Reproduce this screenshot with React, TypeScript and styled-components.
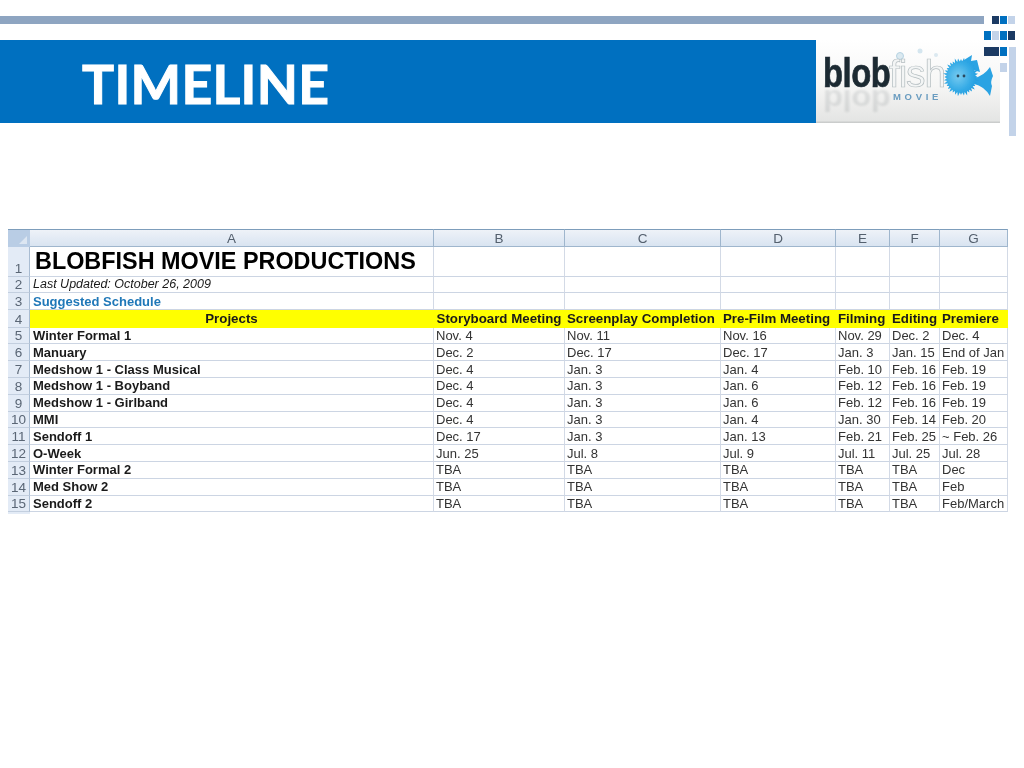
import styled, { createGlobalStyle } from 'styled-components'

type Tone = 'navy' | 'blue' | 'light'

const toneColors: Record<Tone, string> = {
  navy: '#1b3a63',
  blue: '#0070c0',
  light: '#c3d3e9',
}

const columnLetters = ['A', 'B', 'C', 'D', 'E', 'F', 'G']

const tableHeaders = [
  'Projects',
  'Storyboard Meeting',
  'Screenplay Completion',
  'Pre-Film Meeting',
  'Filming',
  'Editing',
  'Premiere',
]

const schedule = [
  ['Winter Formal 1', 'Nov. 4', 'Nov. 11', 'Nov. 16', 'Nov. 29', 'Dec. 2', 'Dec. 4'],
  ['Manuary', 'Dec. 2', 'Dec. 17', 'Dec. 17', 'Jan. 3', 'Jan. 15', 'End of Jan'],
  ['Medshow 1 - Class Musical', 'Dec. 4', 'Jan. 3', 'Jan. 4', 'Feb. 10', 'Feb. 16', 'Feb. 19'],
  ['Medshow 1 - Boyband', 'Dec. 4', 'Jan. 3', 'Jan. 6', 'Feb. 12', 'Feb. 16', 'Feb. 19'],
  ['Medshow 1 - Girlband', 'Dec. 4', 'Jan. 3', 'Jan. 6', 'Feb. 12', 'Feb. 16', 'Feb. 19'],
  ['MMI', 'Dec. 4', 'Jan. 3', 'Jan. 4', 'Jan. 30', 'Feb. 14', 'Feb. 20'],
  ['Sendoff 1', 'Dec. 17', 'Jan. 3', 'Jan. 13', 'Feb. 21', 'Feb. 25', '~ Feb. 26'],
  ['O-Week', 'Jun. 25', 'Jul. 8', 'Jul. 9', 'Jul. 11', 'Jul. 25', 'Jul. 28'],
  ['Winter Formal 2', 'TBA', 'TBA', 'TBA', 'TBA', 'TBA', 'Dec'],
  ['Med Show 2', 'TBA', 'TBA', 'TBA', 'TBA', 'TBA', 'Feb'],
  ['Sendoff 2', 'TBA', 'TBA', 'TBA', 'TBA', 'TBA', 'Feb/March'],
]

const GlobalStyle = createGlobalStyle`
  html, body {
    margin: 0;
    padding: 0;
    background: #fff;
  }
`

const Page = styled.div`
  position: relative;
  width: 1024px;
  height: 768px;
  padding-top: 16px;
  box-sizing: border-box;
  overflow: hidden;
  background: #fff;
`

const TopBar = styled.div`
  width: 984px;
  height: 8px;
  margin-bottom: 16px;
  background: #8ea5c1;
`

const Banner = styled.header`
  display: flex;
  width: 1000px;
  height: 83px;
`

const TitleBlock = styled.div`
  display: flex;
  align-items: center;
  width: 816px;
  padding: 4px 0 0 82px;
  box-sizing: border-box;
  background: #0070c0;
`

const Title = styled.h1`
  margin: 0;
  color: #fff;
  font-family: Lato, 'Open Sans', sans-serif;
  font-size: 53.5px;
  font-weight: 700;
  line-height: 1;
  letter-spacing: 0.3px;
  -webkit-text-stroke: 1px #fff;
`

const LogoFrame = styled.svg`
  display: block;
  width: 184px;
  height: 83px;
`

const Squares = styled.div`
  position: absolute;
  top: 16px;
  left: 984px;
  display: grid;
  grid-template-columns: repeat(4, 8px);
  grid-template-rows: 8px 9px 9px 9px 57px;
  row-gap: 7px;
`

const Square = styled.div<{ $tone: Tone; $col: number; $row: number; $colSpan?: number; $rowSpan?: number }>`
  grid-column: ${(p) => p.$col} / span ${(p) => p.$colSpan ?? 1};
  grid-row: ${(p) => p.$row} / span ${(p) => p.$rowSpan ?? 1};
  margin-right: 1px;
  background: ${(p) => toneColors[p.$tone]};
`

const TallSquare = styled(Square)`
  margin: 0 0 0 1px;
`

const Sheet = styled.section`
  display: grid;
  grid-template-columns: 22px 404px 131px 156px 115px 54px 50px 68px;
  grid-template-rows: 18px 29.5px 16.9px 16.9px 17.4px repeat(11, 16.8px) 2px;
  width: 1000px;
  margin: 106px 0 0 8px;
  font-family: 'Liberation Sans', Arial, sans-serif;
  font-size: 13px;
  color: #333;
  filter: blur(0.3px);
`

const Corner = styled.div`
  position: relative;
  background: #b9cde5;
  border-top: 1px solid #7d9dbb;
  box-sizing: border-box;

  &::after {
    content: '';
    position: absolute;
    right: 3px;
    bottom: 3px;
    border-style: solid;
    border-width: 0 0 8px 8px;
    border-color: transparent transparent #dce6f2 transparent;
  }
`

const ColumnHead = styled.div`
  display: flex;
  align-items: center;
  justify-content: center;
  box-sizing: border-box;
  background: linear-gradient(#eef2f8, #d9e4f1);
  border-top: 1px solid #7d9dbb;
  border-right: 1px solid #9fb6cd;
  border-bottom: 1px solid #9fb6cd;
  color: #54606e;
  font-size: 13.5px;
`

const RowHead = styled.div`
  display: flex;
  align-items: flex-end;
  justify-content: center;
  box-sizing: border-box;
  background: #e3ebf6;
  border-bottom: 1px solid #c3cfdf;
  border-right: 1px solid #a9bcd2;
  color: #5a6675;
  font-size: 13.5px;
  line-height: 14px;
`

const Cell = styled.div<{ $center?: boolean; $bold?: boolean; $fill?: boolean; $inset?: number }>`
  display: flex;
  align-items: center;
  justify-content: ${(p) => (p.$center ? 'center' : 'flex-start')};
  min-width: 0;
  padding-left: ${(p) => (p.$center ? 0 : (p.$inset ?? 2))}px;
  box-sizing: border-box;
  border-right: 1px solid ${(p) => (p.$fill ? '#ffff00' : '#d3dae6')};
  border-bottom: 1px solid ${(p) => (p.$fill ? '#ffff00' : '#ccd5e3')};
  background: ${(p) => (p.$fill ? '#ffff00' : '#fff')};
  color: ${(p) => (p.$bold ? '#1a1a1a' : '#333')};
  font-size: ${(p) => (p.$fill ? '13.3px' : '13px')};
  font-weight: ${(p) => (p.$bold ? 700 : 400)};
  white-space: nowrap;
`

const SheetTitle = styled.span`
  padding: 1px 0 0 3px;
  color: #000;
  font-size: 23.4px;
  font-weight: 700;
`

const UpdatedNote = styled.span`
  padding-left: 1px;
  font-size: 12.5px;
  font-style: italic;
  color: #1a1a1a;
`

const SheetSubtitle = styled.span`
  padding-left: 1px;
  color: #1f78b8;
  font-weight: 700;
`

const SheetEnd = styled.div`
  background: #e3ebf6;
`

const fishOutline = Array.from({ length: 72 }, (_, i) => {
  const angle = (i / 72) * Math.PI * 2
  const radius = i % 2 === 0 ? 18 + (i % 3) * 0.8 : 15.5
  const x = 145 + Math.cos(angle) * radius * 0.92
  const y = 37 + Math.sin(angle) * radius
  return `${x.toFixed(1)},${y.toFixed(1)}`
}).join(' ')

const logoFont = 'Liberation Sans, Arial, sans-serif'

const Logo = () => (
  <LogoFrame viewBox="0 0 184 83" role="img" aria-label="blobfish movie">
    <defs>
      <linearGradient id="logoBg" x1="0" y1="0" x2="0" y2="1">
        <stop offset="0" stopColor="#ffffff" />
        <stop offset="0.55" stopColor="#f6f6f5" />
        <stop offset="0.97" stopColor="#e4e5e4" />
        <stop offset="1" stopColor="#c4c6c6" />
      </linearGradient>
      <filter id="soft">
        <feGaussianBlur stdDeviation="0.45" />
      </filter>
      <filter id="softer">
        <feGaussianBlur stdDeviation="1" />
      </filter>
      <radialGradient id="fishBody" cx="0.42" cy="0.48" r="0.6">
        <stop offset="0" stopColor="#78cbf0" />
        <stop offset="0.6" stopColor="#35abe6" />
        <stop offset="1" stopColor="#1f9ade" />
      </radialGradient>
    </defs>
    <rect width="184" height="83" fill="url(#logoBg)" />
    <g filter="url(#softer)" opacity="0.1">
      <text
        transform="translate(7 50) scale(0.82 -0.75)"
        fontFamily={logoFont}
        fontSize="40"
        fontWeight="700"
        letterSpacing="-0.6"
        fill="#1c2a33"
      >
        blob
      </text>
    </g>
    <g filter="url(#soft)">
      <circle cx="84" cy="16" r="3.5" fill="#dbe9f0" stroke="#b5d2e2" />
      <circle cx="104" cy="11" r="2.5" fill="#d5e6ef" />
      <circle cx="120" cy="15" r="2" fill="#dbe9f0" />
      <text
        transform="translate(7 47) scale(0.82 1)"
        fontFamily={logoFont}
        fontSize="40"
        fontWeight="700"
        letterSpacing="-0.6"
        fill="#1c2a33"
        stroke="#1c2a33"
        strokeWidth="0.7"
      >
        blob
      </text>
      <text
        x="73"
        y="47"
        fontFamily={logoFont}
        fontSize="39"
        letterSpacing="-1.2"
        fill="#f3f5f5"
        stroke="#b4bdc0"
        strokeWidth="0.7"
      >
        fish
      </text>
      <text
        x="77"
        y="60"
        fontFamily={logoFont}
        fontSize="9.5"
        fontWeight="700"
        letterSpacing="3.7"
        fill="#6a9cc0"
      >
        MOVIE
      </text>
      <path d="M140 25 L156 15 L155 21 L161 20 L164 32 Z" fill="#2aa3e3" />
      <path d="M158 38 Q168 36 174 27 L177 36 Q174 42 176 46 L174 56 Q168 46 158 44 Z" fill="#2aa3e3" />
      <polygon points={fishOutline} fill="url(#fishBody)" />
      <circle cx="142" cy="36" r="1.4" fill="#2b4a5e" />
      <circle cx="148" cy="36" r="1.4" fill="#2b4a5e" />
    </g>
  </LogoFrame>
)

export default function App() {
  return (
    <Page>
      <GlobalStyle />
      <TopBar />
      <Banner>
        <TitleBlock>
          <Title>TIMELINE</Title>
        </TitleBlock>
        <Logo />
      </Banner>

      <Squares>
        <Square $tone="navy" $col={2} $row={1} />
        <Square $tone="blue" $col={3} $row={1} />
        <Square $tone="light" $col={4} $row={1} />
        <Square $tone="blue" $col={1} $row={2} />
        <Square $tone="light" $col={2} $row={2} />
        <Square $tone="blue" $col={3} $row={2} />
        <Square $tone="navy" $col={4} $row={2} />
        <Square $tone="navy" $col={1} $row={3} $colSpan={2} />
        <Square $tone="blue" $col={3} $row={3} />
        <TallSquare $tone="light" $col={4} $row={3} $rowSpan={3} />
        <Square $tone="light" $col={3} $row={4} />
      </Squares>

      <Sheet>
        <Corner />
        {columnLetters.map((letter) => (
          <ColumnHead key={letter}>{letter}</ColumnHead>
        ))}

        <RowHead>1</RowHead>
        <Cell>
          <SheetTitle>BLOBFISH MOVIE PRODUCTIONS</SheetTitle>
        </Cell>
        {columnLetters.slice(1).map((letter) => (
          <Cell key={letter} />
        ))}

        <RowHead>2</RowHead>
        <Cell>
          <UpdatedNote>Last Updated: October 26, 2009</UpdatedNote>
        </Cell>
        {columnLetters.slice(1).map((letter) => (
          <Cell key={letter} />
        ))}

        <RowHead>3</RowHead>
        <Cell>
          <SheetSubtitle>Suggested Schedule</SheetSubtitle>
        </Cell>
        {columnLetters.slice(1).map((letter) => (
          <Cell key={letter} />
        ))}

        <RowHead>4</RowHead>
        {tableHeaders.map((header, index) => (
          <Cell key={header} $center={index < 2} $bold $fill>
            {header}
          </Cell>
        ))}

        {schedule.map((row, rowIndex) => [
          <RowHead key={`head-${rowIndex}`}>{rowIndex + 5}</RowHead>,
          ...row.map((value, colIndex) => (
            <Cell key={`${rowIndex}-${colIndex}`} $bold={colIndex === 0} $inset={colIndex === 0 ? 3 : 2}>
              {value}
            </Cell>
          )),
        ])}

        <SheetEnd />
      </Sheet>
    </Page>
  )
}
